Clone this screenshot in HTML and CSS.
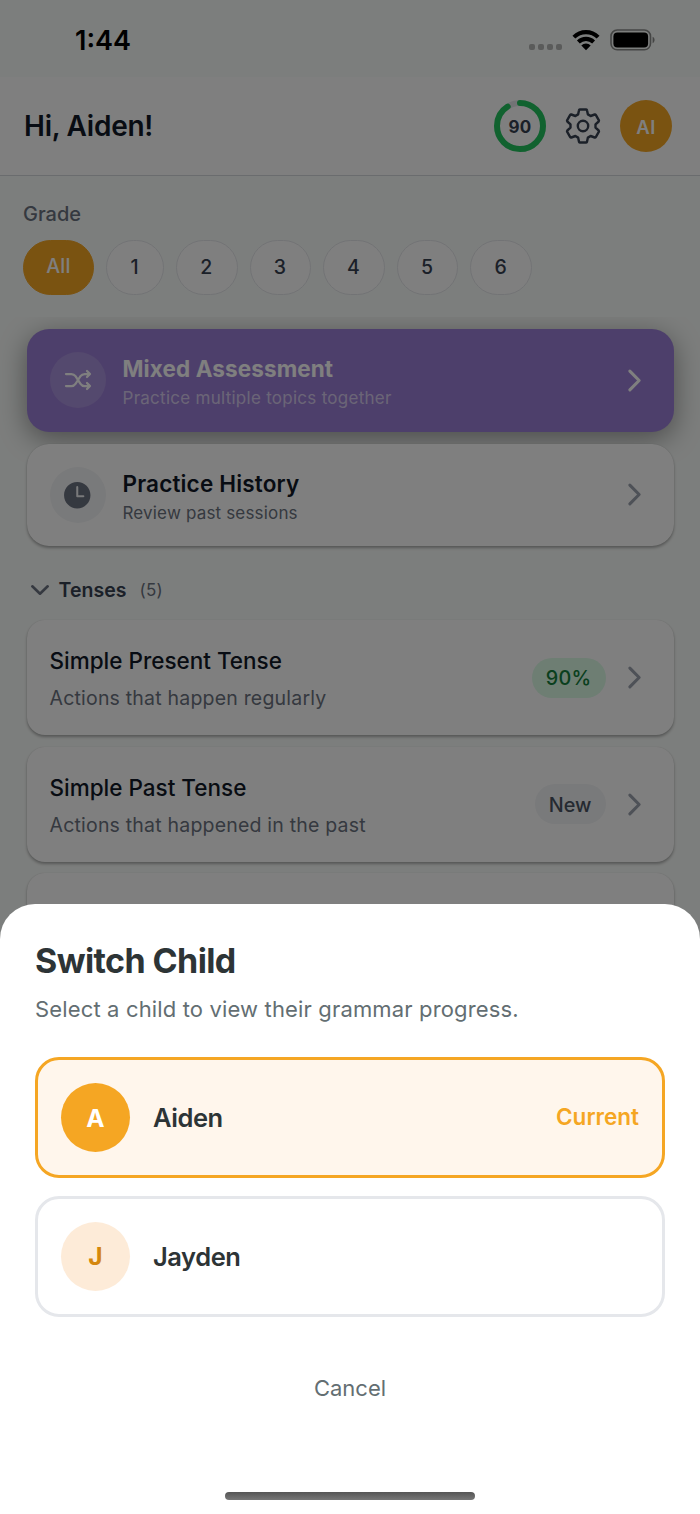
FILE: index.html
```html
<!DOCTYPE html>
<html lang="en">
<head>
<meta charset="utf-8">
<title>Grammar practice</title>
<link rel="stylesheet" href="styles.css">
</head>
<body>
<svg class="defs" aria-hidden="true">
  <symbol id="chevron" viewBox="0 0 512 512"><path d="M184 112l144 144-144 144" fill="none" stroke="currentColor" stroke-width="48" stroke-linecap="round" stroke-linejoin="round"/></symbol>
</svg>
<div class="phone">
  <div class="status">
    <span class="time">1:44</span>
    <div class="status-icons">
      <span class="dots"><i></i><i></i><i></i><i></i></span>
      <svg class="wifi" width="28" height="22" viewBox="0 0 28 22"><g fill="none" stroke="#000" stroke-width="4.1"><path d="M1.9 8.1a17.2 17.2 0 0 1 24.2 0"/><path d="M6.4 13a10.8 10.8 0 0 1 15.2 0"/></g><path d="M9.3 16.4a6.6 6.6 0 0 1 9.4 0L14 21.2z"/></svg>
      <svg class="battery" width="46" height="22" viewBox="0 0 46 22"><rect x="1" y="1" width="39.5" height="19.8" rx="6.2" fill="none" stroke="#000" stroke-opacity=".45" stroke-width="1.6"/><rect x="3.4" y="3.4" width="34.7" height="15" rx="4" /><path d="M42.6 7.8c2.6 1 2.6 5.4 0 6.400z" fill-opacity=".45"/></svg>
    </div>
  </div>
  <header class="header">
    <h1 class="hello">Hi, Aiden!</h1>
    <div class="ring">
      <svg width="54" height="54" viewBox="0 0 54 54"><circle cx="27" cy="27" r="23" fill="none" stroke="#e5e7eb" stroke-width="6"/><circle cx="27" cy="27" r="23" fill="none" stroke="#22c55e" stroke-width="6" stroke-linecap="round" pathLength="100" stroke-dasharray="91 100" transform="rotate(-90 27 27)"/></svg>
      <span class="score">90</span>
    </div>
    <svg class="gear" width="38" height="38" viewBox="-19 -19 38 38"><g fill="none" stroke="#374151" stroke-width="2.4" stroke-linejoin="round"><path d="M-3.200-16.500H3.200Q3.900-16.500 4-15.800L4.900-11.600Q6.200-10.900 7.600-10L11.700-11.500Q12.400-11.700 12.800-11.100L15.900-5.700Q16.200-5 15.700-4.500L12.500-1.600V1.600L15.700 4.500Q16.200 5 15.900 5.700L12.800 11.100Q12.400 11.700 11.700 11.500L7.600 10Q6.200 10.900 4.900 11.600L4 15.800Q3.900 16.500 3.200 16.500H-3.200Q-3.900 16.500-4 15.800L-4.900 11.600Q-6.200 10.900-7.600 10L-11.700 11.500Q-12.400 11.700-12.800 11.100L-15.900 5.700Q-16.200 5-15.700 4.500L-12.500 1.600V-1.600L-15.700-4.500Q-16.200-5-15.900-5.700L-12.800-11.100Q-12.400-11.700-11.700-11.500L-7.600-10Q-6.200-10.900-4.900-11.600L-4-15.800Q-3.900-16.500-3.200-16.500Z"/><circle r="5.200"/></g></svg>
    <span class="me">AI</span>
  </header>
  <section class="grades">
    <div class="label">Grade</div>
    <div class="chips">
      <span class="chip chip-on">All</span>
      <span class="chip chip-narrow">1</span><span class="chip">2</span><span class="chip">3</span><span class="chip">4</span><span class="chip">5</span><span class="chip">6</span>
    </div>
  </section>
  <main class="scroll">
    <article class="action mixed">
      <span class="badge"><svg width="32" height="32" viewBox="0 0 512 512" fill="none" stroke="#fff" stroke-width="36" stroke-linecap="round" stroke-linejoin="round"><path d="M400 304l48 48-48 48M400 112l48 48-48 48M64 352h85.190a80 80 0 0 0 66.560-35.620L256 256M64 160h85.190a80 80 0 0 1 66.560 35.620l80.500 120.760A80 80 0 0 0 362.810 352H440M440 160h-77.190a80 80 0 0 0-66.560 35.620L256 256"/></svg></span>
      <div class="copy"><h2 class="action-title bold">Mixed Assessment</h2><p class="action-sub sub-mixed">Practice multiple topics together</p></div>
      <svg class="chev"><use href="#chevron"/></svg>
    </article>
    <article class="action history">
      <span class="badge"><svg width="32.500" height="32.500" viewBox="0 0 512 512" fill="#6b7280"><path d="M256 48C141.130 48 48 141.130 48 256s93.130 208 208 208 208-93.130 208-208S370.870 48 256 48zm96 240H256a16 16 0 0 1-16-16V128a16 16 0 0 1 32 0v128h80a16 16 0 0 1 0 32z"/></svg></span>
      <div class="copy"><h2 class="action-title title-history">Practice History</h2><p class="action-sub sub-history">Review past sessions</p></div>
      <svg class="chev"><use href="#chevron"/></svg>
    </article>
    <div class="group">
      <svg class="chev-down" width="20" height="12" viewBox="0 0 20 12"><path d="M2.300 2.300L10 9.700l7.700-7.400" fill="none" stroke="#6b7280" stroke-width="2.600" stroke-linecap="round" stroke-linejoin="round"/></svg>
      <span class="group-name">Tenses</span><span class="group-count">(5)</span>
    </div>
    <article class="topic">
      <div class="copy"><h3 class="topic-title">Simple Present Tense</h3><p class="topic-sub">Actions that happen regularly</p></div>
      <span class="pill pill-good">90%</span>
      <svg class="chev"><use href="#chevron"/></svg>
    </article>
    <article class="topic">
      <div class="copy"><h3 class="topic-title">Simple Past Tense</h3><p class="topic-sub">Actions that happened in the past</p></div>
      <span class="pill">New</span>
      <svg class="chev"><use href="#chevron"/></svg>
    </article>
    <article class="topic"></article>
  </main>
  <div class="scrim">
    <div class="sheet">
      <h2 class="sheet-title">Switch Child</h2>
      <p class="sheet-sub">Select a child to view their grammar progress.</p>
      <div class="child child-on"><span class="avatar">A</span><span class="name">Aiden</span><span class="current">Current</span></div>
      <div class="child"><span class="avatar">J</span><span class="name">Jayden</span></div>
      <div class="cancel">Cancel</div>
      <div class="homebar"></div>
    </div>
  </div>
</div>
</body>
</html>
```
FILE: styles.css
```css
* { box-sizing: border-box; }
body { margin: 0; font-family: Inter, "Liberation Sans", sans-serif; }
h1, h2, h3, p { margin: 0; }
svg { display: block; flex: none; }
.defs { position: absolute; width: 0; height: 0; }

.phone { position: relative; width: 700px; height: 1514px; overflow: hidden; background: #f9fcfa; display: flex; flex-direction: column; }

.status { height: 77px; flex: none; display: flex; align-items: flex-start; justify-content: space-between; padding: 0 44px 0 75px; }
.time { font-size: 27px; font-weight: 600; line-height: 32px; margin-top: 25px; }
.status-icons { display: flex; align-items: flex-start; padding-top: 29px; }
.dots { display: flex; gap: 3px; margin: 15px 10px 0 0; }
.dots i { width: 6px; height: 6px; border-radius: 2px; background: #b4b6b5; }
.battery { margin-left: 10px; }

.header { height: 99px; flex: none; background: #fff; border-bottom: 1px solid #d5d8dc; display: flex; align-items: center; padding: 0 28px 0 24px; }
.hello { flex: 1; font-size: 28px; font-weight: 600; letter-spacing: -.25px; color: #111827; white-space: nowrap; }
.ring { display: grid; place-items: center; }
.ring > * { grid-area: 1 / 1; }
.score { font-size: 17px; font-weight: 700; color: #374151; letter-spacing: .3px; padding-top: 1px; }
.gear { margin: 0 18px 0 17px; }
.me { width: 52px; height: 52px; border-radius: 50%; background: #f5a623; color: #fff; display: grid; place-items: center; font-size: 18.500px; font-weight: 600; letter-spacing: .4px; padding-top: 1px; }

.grades { height: 141px; flex: none; padding: 25px 23px 0; }
.label { font-size: 20px; font-weight: 500; line-height: 26px; color: #6b7280; }
.chips { display: flex; gap: 12px; margin-top: 12.500px; }
.chip { width: 61.600px; height: 55px; border: 1.700px solid #e5e7eb; border-radius: 28px; background: #fff; color: #374151; font-size: 19.500px; font-weight: 500; display: grid; place-items: center; padding-right: 1px; }
.chip-narrow { width: 58px; }
.chip-on { width: 71px; border-color: #f5a623; background: #f5a623; color: #fff; padding: 0 0 2px; letter-spacing: .3px; }

.scroll { flex: 1; overflow: hidden; padding: 12px 26.500px 0; }
.action { height: 102.500px; border-radius: 22px; display: flex; align-items: center; padding: 0 23px; background: #fff; }
.mixed { background: #9b7fd6; color: #fff; box-shadow: 0 7px 28px rgba(0,0,0,.4); }
.history { margin-top: 12px; position: relative; box-shadow: 0 2px 3px rgba(0,0,0,.3), 0 0 1px rgba(0,0,0,.15); color: #111827; }
.badge { width: 56px; height: 56px; border-radius: 50%; display: grid; place-items: center; background: rgba(255,255,255,.15); margin-right: 17px; }
.history .badge { background: #f3f4f6; }
.copy { flex: 1; white-space: nowrap; }
.action .copy { padding-top: 4px; }
.action-title { font-size: 22.500px; font-weight: 600; line-height: 28px; letter-spacing: .1px; }
.title-history { letter-spacing: .17px; }
.bold { font-weight: 700; }
.action-sub { font-size: 17px; line-height: 22px; margin-top: 4px; color: #6b7280; letter-spacing: .27px; }
.sub-history { letter-spacing: .17px; }
.sub-mixed { color: rgba(255,255,255,.6); }
.chev { width: 33px; height: 33px; color: #9ca3af; }
.mixed .chev { color: #fff; }

.group { display: flex; align-items: center; height: 74px; padding: 13px 3px 0; }
.group-name { font-size: 19.500px; font-weight: 600; color: #374151; margin-left: 9px; letter-spacing: .05px; }
.group-count { font-size: 17px; color: #6b7280; margin-left: 13px; letter-spacing: .2px; }

.topic { height: 115px; border-radius: 18px; background: #fff; box-shadow: 0 2px 3px rgba(0,0,0,.3), 0 0 1px rgba(0,0,0,.15); display: flex; align-items: center; padding: 0 23px; margin-bottom: 11.500px; }
.topic .copy { padding-top: 2px; }
.topic-title { font-size: 22.500px; font-weight: 500; line-height: 30px; color: #111827; }
.topic-sub { font-size: 19.500px; line-height: 26px; margin-top: 9px; color: #6b7280; letter-spacing: .2px; }
.pill { height: 40px; border-radius: 20px; padding: 0 14px; display: flex; align-items: center; font-size: 19.800px; font-weight: 500; background: #f3f4f6; color: #4b5563; margin-right: 12px; padding-top: 1px; }
.pill-good { background: #dcfce7; color: #15803d; letter-spacing: .3px; }

/* modal layer over the page */
.scrim { position: absolute; inset: 0; background: rgba(0,0,0,.5); display: flex; flex-direction: column; justify-content: flex-end; }
.sheet { height: 610.500px; background: #fff; border-radius: 35px 35px 0 0; padding: 35px 35px 0; display: flex; flex-direction: column; }
.sheet-title { font-size: 34px; font-weight: 700; line-height: 44px; letter-spacing: -.6px; color: #2d3436; white-space: nowrap; }
.sheet-sub { font-size: 22px; line-height: 30px; margin-top: 11px; letter-spacing: .15px; color: #636e72; white-space: nowrap; }
.child { height: 121px; flex: none; margin-top: 17.500px; border: 3.500px solid #e5e7eb; border-radius: 24px; display: flex; align-items: center; padding: 0 23px; }
.child-on { margin-top: 33.500px; border-color: #f5a623; background: #fff6ec; }
.avatar { width: 69px; height: 69px; border-radius: 50%; background: #fdebd8; color: #d4870e; font-size: 24.500px; font-weight: 700; display: grid; place-items: center; margin-right: 23px; }
.child-on .avatar { background: #f5a623; color: #fff; }
.name { flex: 1; font-size: 25.500px; font-weight: 600; letter-spacing: -.45px; color: #2d3436; }
.current { font-size: 22.500px; font-weight: 600; color: #f5a623; padding-bottom: 2px; }
.cancel { text-align: center; font-size: 22px; line-height: 30px; margin-top: 56px; color: #636e72; }
.homebar { width: 250px; height: 8px; border-radius: 4px; margin: 89.500px auto 0; background: linear-gradient(#555, #777); }
```
